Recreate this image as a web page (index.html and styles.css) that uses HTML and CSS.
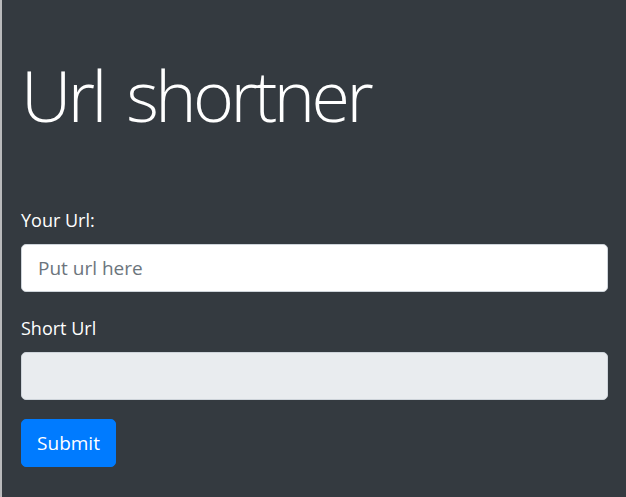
FILE: index.html
```html
<!DOCTYPE html>
<html>
<head>
<meta charset="utf-8">
<link rel="stylesheet" href="styles.css">
</head>
<body>
<div class="jumbo">
  <h1 class="title">Url shortner</h1>
  <form class="form">
    <div class="group">
      <label class="label" for="url">Your Url:</label>
      <input class="field" id="url" type="text" placeholder="Put url here">
    </div>
    <div class="group group-last">
      <label class="label" for="short">Short Url</label>
      <input class="field field-ro" id="short" type="text" readonly>
    </div>
    <button class="btn" type="button">Submit</button>
  </form>
</div>
</body>
</html>
```
FILE: styles.css
```css
html, body {
  margin: 0;
  padding: 0;
  height: 100%;
  background: #343a40;
}
body {
  font-family: "Open Sans", "Noto Sans", sans-serif;
  color: #fff;
}
.jumbo {
  background: #343a40;
  border-left: 2px solid #b9babc;
  min-height: 100%;
  box-sizing: border-box;
  padding: 52px 18px 40px 19px;
}
.title {
  margin: 0 0 70px 0;
  font-weight: 300;
  font-size: 70px;
  line-height: 86px;
  letter-spacing: -3.6px;
  word-spacing: 8px;
}
.form {
  display: flex;
  flex-direction: column;
  align-items: flex-start;
}
.group {
  display: flex;
  flex-direction: column;
  align-self: stretch;
  margin-bottom: 24px;
}
.group-last {
  margin-bottom: 19px;
}
.label {
  font-size: 18px;
  line-height: 24px;
  margin-bottom: 12px;
}
.field {
  box-sizing: border-box;
  height: 48px;
  padding: 8px 16px;
  font-family: inherit;
  font-size: 19px;
  border: 1px solid #ced4da;
  border-radius: 5px;
  background: #fff;
  color: #495057;
  outline: none;
}
.field::placeholder {
  color: #6c757d;
}
.field-ro {
  background: #e9ecef;
}
.btn {
  box-sizing: border-box;
  height: 48px;
  width: 95px;
  padding: 0;
  font-family: inherit;
  font-size: 19px;
  color: #fff;
  background: #007bff;
  border: 1px solid #007bff;
  border-radius: 5px;
}
```
